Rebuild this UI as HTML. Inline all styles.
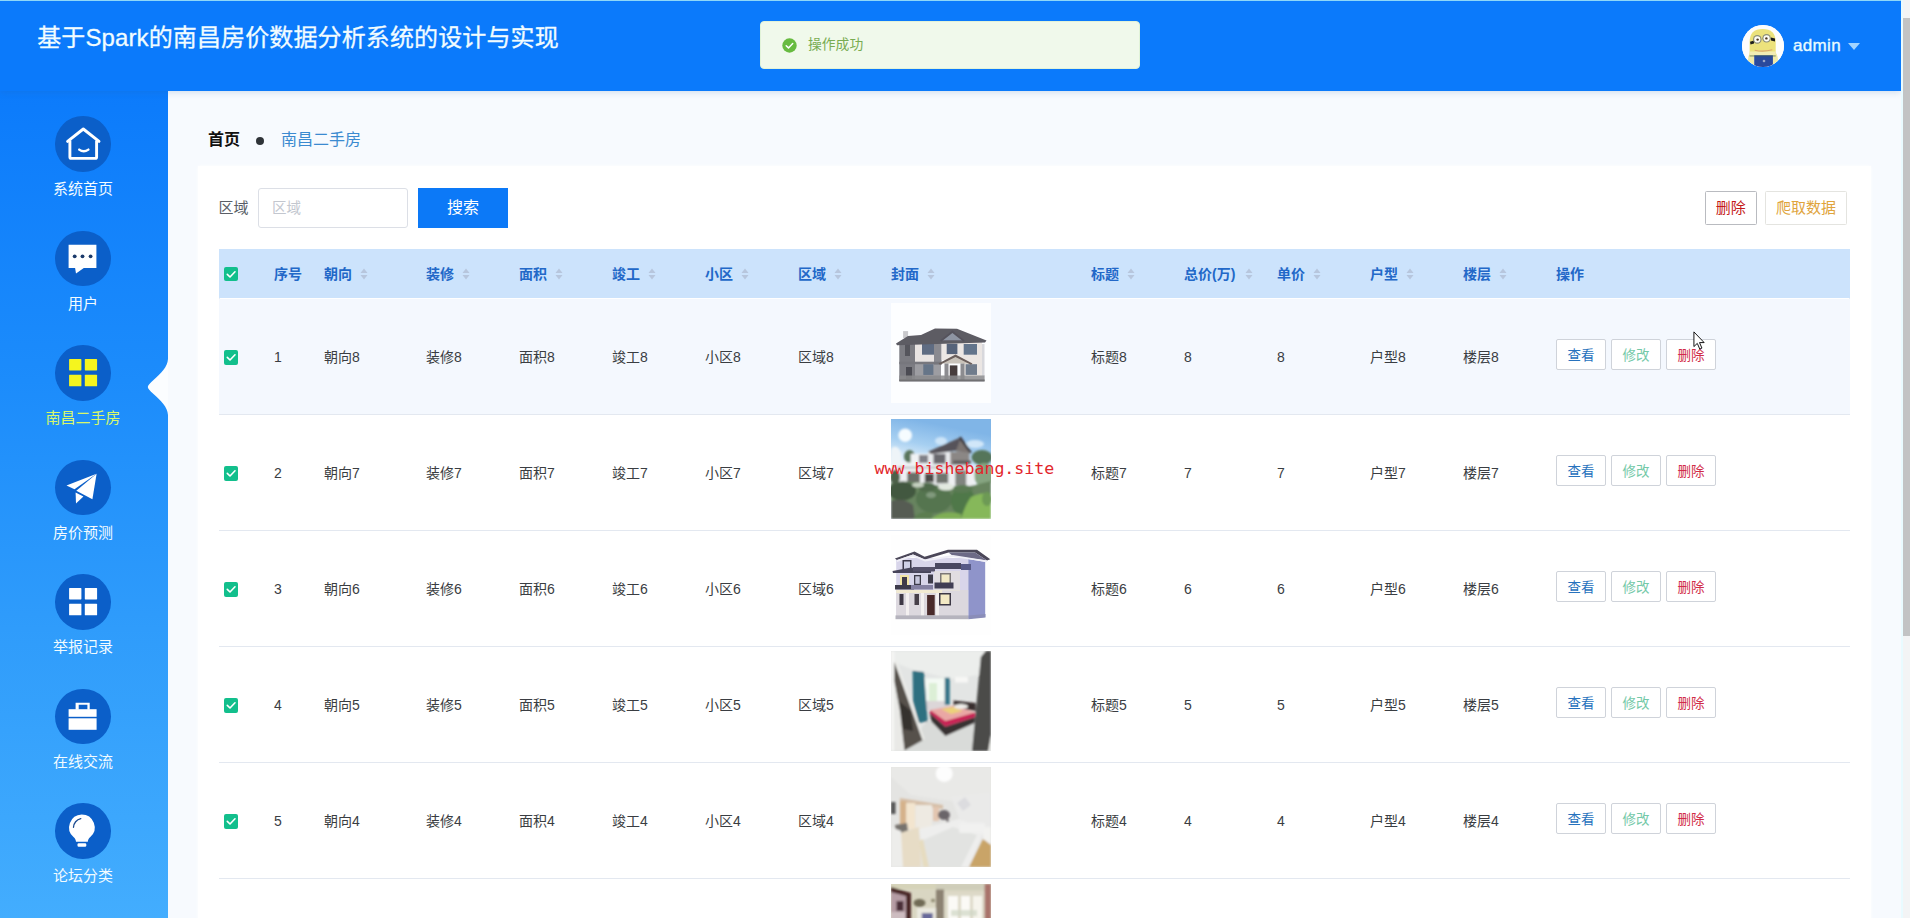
<!DOCTYPE html>
<html lang="zh-CN">
<head>
<meta charset="utf-8">
<title>基于Spark的南昌房价数据分析系统的设计与实现</title>
<style>
*{box-sizing:border-box;margin:0;padding:0}
html,body{width:1910px;height:918px;overflow:hidden;background:#f7faff}
body{font-family:"Liberation Sans","Noto Sans CJK SC",sans-serif;position:relative;color:#333}
.abs{position:absolute}
#page{position:absolute;left:0;top:0;width:1910px;height:918px;overflow:hidden;background:#f6f9fe}
/* header */
#hdr{position:absolute;left:0;top:0;width:1901px;height:91px;background:#0b7afb;box-shadow:0 1px 7px rgba(40,90,160,.2);z-index:5}
#hdr .topline{position:absolute;left:0;top:0;width:1910px;height:1px;background:#8fd8f8}
#title{position:absolute;left:37.200px;top:21.500px;font-size:24px;line-height:32px;color:#f1fcff;-webkit-text-stroke:.3px #f1fcff;white-space:nowrap;letter-spacing:.12px}
#toast{position:absolute;left:760px;top:20.5px;width:380px;height:48.5px;background:#f0f9eb;border:1px solid #e1f3d8;border-radius:4px}
#toast .ic{position:absolute;left:21px;top:16.5px;width:15px;height:15px}
#toast .tx{position:absolute;left:47px;top:13px;font-size:13.800px;line-height:20px;color:#78ac52;white-space:nowrap}
#avatar{position:absolute;left:1742px;top:25px;width:42px;height:42px;border-radius:50%;overflow:hidden;background:#fff}
#uname{position:absolute;left:1793px;top:35px;font-size:17px;line-height:22px;color:#e8fbff;white-space:nowrap;letter-spacing:.35px;-webkit-text-stroke:.35px #e8fbff}
#caret{position:absolute;left:1848px;top:43px;width:0;height:0;border-left:6px solid transparent;border-right:6px solid transparent;border-top:7px solid rgba(190,228,255,.85)}
/* sidebar */
#side{position:absolute;left:0;top:91px;width:168px;height:827px;background:linear-gradient(180deg,#0c7bfb 0%,#1c8cfb 35%,#2f9cfb 65%,#43adfe 100%);z-index:2}
.mi{position:absolute;left:0;width:168px;height:100px;text-align:center}
.mi .c{position:absolute;left:55.300px;top:0;width:55.700px;height:55.700px;border-radius:50%;background:#0b5fc9}
.mi .c svg{position:absolute;left:0;top:0;width:56px;height:56px}
.mi .t{position:absolute;left:0;top:62px;width:166px;font-size:15px;line-height:22px;color:#f2fbff;white-space:nowrap;text-align:center}
.mi.on .t{color:#d8f76a}
#notch{position:absolute;left:147px;top:267.500px;width:21px;height:56px}
/* main */
#main{position:absolute;left:168px;top:91px;width:1735px;height:827px;background:#f7fafe}
#card{position:absolute;left:198px;top:166px;width:1673px;height:760px;background:#fff;box-shadow:0 0 3px #fff}
#bc1{position:absolute;left:208px;top:129px;font-size:16px;line-height:22px;font-weight:bold;color:#111;white-space:nowrap}
#bcdot{position:absolute;left:256px;top:137px;width:8px;height:8px;border-radius:50%;background:#2f3338}
#bc2{position:absolute;left:281px;top:129px;font-size:16px;line-height:22px;color:#3b8ad0;white-space:nowrap}
#lab{position:absolute;left:218.5px;top:197px;font-size:15px;line-height:22px;color:#5a5e66;white-space:nowrap}
#inp{position:absolute;left:258px;top:188px;width:150px;height:39.5px;border:1px solid #dcdfe6;border-radius:3px;background:#fff}
#inp span{position:absolute;left:13px;top:9px;font-size:14.5px;line-height:20px;color:#c3c7cf;white-space:nowrap}
#sbtn{position:absolute;left:418px;top:188px;width:90px;height:40px;background:#0c79f7;color:#fff;font-size:16px;line-height:40px;text-align:center}
.tb{position:absolute;top:191px;height:33.500px;border:1px solid #c9cbd0;border-radius:1.500px;background:#fff;font-size:15px;line-height:32px;text-align:center;white-space:nowrap}
/* table */
#th{position:absolute;left:219px;top:249px;width:1630.500px;height:49.300px;background:#cce3fc}
.h{position:absolute;top:264px;font-size:14px;line-height:20px;font-weight:bold;color:#2268c8;white-space:nowrap}
.sc{position:absolute;top:267.700px;width:8px;height:12px}
.row{position:absolute;left:219px;width:1630.5px;height:116px;border-bottom:1px solid #e3e8f0;background:#fff}
.row.hv{background:#f4f8fe}
.row span{position:absolute;top:48.2px;font-size:14px;line-height:20px;color:#3a3d42;white-space:nowrap}
.cb{position:absolute;width:14.5px;height:14.5px;border-radius:2px;background:#12bf8c}
.cb svg{position:absolute;left:0;top:0;width:14.5px;height:14.5px}
.img{position:absolute;left:672px;top:4.5px;width:100px;height:100px;overflow:hidden}
.img svg{display:block;width:100px;height:100px}
.row .b{position:absolute;top:40px;width:50px;height:31.5px;border:1px solid #cfd3da;border-radius:2px;background:#fff;font-size:13.5px !important;line-height:32.5px !important;text-align:center}
.b1{left:1337px;color:#2772bd !important;border-color:#cfd3da}
.b2{left:1392px;color:#74c9a8 !important;border-color:#dde1e6}
.b3{left:1447px;color:#d12c48 !important;border-color:#d9b9bd}
#wm{position:absolute;left:874.500px;top:457.500px;font-family:"DejaVu Sans Mono","Liberation Mono",monospace;font-size:16.600px;line-height:22px;color:#e2262c;white-space:nowrap;z-index:4}
/* scrollbar */
#sbar{position:absolute;left:1903px;top:0;width:7px;height:918px;background:#f3f4f5;z-index:9}
#sbar i{position:absolute;left:0;top:18px;width:7px;height:618px;background:#c2c3c4}
#strip{position:absolute;left:1901px;top:0;width:2px;height:918px;background:#e9fbff;z-index:8}
</style>
</head>
<body>
<div id="page">
<!--DEFS--><svg width="0" height="0" style="position:absolute"><defs><filter id="bl1" x="-5%" y="-5%" width="110%" height="110%"><feGaussianBlur stdDeviation="0.350"/></filter><filter id="bl2" x="-5%" y="-5%" width="110%" height="110%"><feGaussianBlur stdDeviation="0.800"/></filter><filter id="bl3" x="-5%" y="-5%" width="110%" height="110%"><feGaussianBlur stdDeviation="0.350"/></filter></defs></svg><!--/DEFS-->
  <div id="main"></div>
  <div id="card"></div>

  <div id="hdr">
    <div class="topline"></div>
    <div id="title">基于Spark的南昌房价数据分析系统的设计与实现</div>
    <div id="toast">
      <svg class="ic" viewBox="0 0 15 15"><circle cx="7.5" cy="7.5" r="7.2" fill="#67bb40"/><path d="M4.2 7.7l2.3 2.2 4.2-4.3" fill="none" stroke="#fff" stroke-width="1.5" stroke-linecap="round" stroke-linejoin="round"/></svg>
      <div class="tx">操作成功</div>
    </div>
    <div id="avatar"><!--AVATAR--><svg viewBox="0 0 42 42" width="42" height="42"><rect width="42" height="42" fill="#fdfdfd"/><g filter="url(#bl3)"><path d="M6 42Q5 30 9 27L12 30V42z" fill="#efe9a8"/><path d="M36 42Q37 30 33 27L30 30V42z" fill="#efe9a8"/><path d="M7.600 31V17Q7.600 4 20.600 4T33.700 17V31z" fill="#ece27c"/><rect x="7.600" y="26.500" width="26.100" height="4" fill="#f2ecb4"/><path d="M12.700 25.200Q21 27.300 30.300 24.800" fill="none" stroke="#dba56c" stroke-width="1.100"/><rect x="12.200" y="30.300" width="18.700" height="12" fill="#2a4a9c"/><rect x="7.600" y="30.300" width="26.100" height="1.300" fill="#3c5a56" opacity=".5"/><circle cx="22" cy="36" r="1.300" fill="#9aa6c8"/><path d="M8 16.800L12 15.500V18.500L8.500 19.500z" fill="#1d1d1d"/><path d="M33 13.500L29 12.500V15.500L33 16.500z" fill="#1d1d1d"/><circle cx="15.300" cy="14.400" r="4.300" fill="#8b8f7a"/><circle cx="24.600" cy="13.300" r="4.300" fill="#8b8f7a"/><circle cx="15.300" cy="14.400" r="3.100" fill="#fffef6"/><circle cx="24.600" cy="13.300" r="3.100" fill="#fffef6"/><circle cx="15.600" cy="14.600" r="1.200" fill="#4a3520"/><circle cx="24.400" cy="13.400" r="1.200" fill="#4a3520"/></g></svg><!--/AVATAR--></div>
    <div id="uname">admin</div>
    <div id="caret"></div>
  </div>

  <div id="side">
    <div class="mi" style="top:25.3px"><div class="c"><svg viewBox="0 0 56 56"><path d="M12.6 25.4L28.300 13l15.700 12.400" fill="none" stroke="#fff" stroke-width="2.900" stroke-linecap="round" stroke-linejoin="round"/><path d="M14.900 24.500V40.900a1.500 1.500 0 0 0 1.500 1.500H40.100a1.500 1.500 0 0 0 1.500-1.500V24.500" fill="none" stroke="#fff" stroke-width="2.900" stroke-linejoin="round"/><path d="M24.200 33.600q4.500 3.400 9.200 0" fill="none" stroke="#fff" stroke-width="2.400" stroke-linecap="round"/></svg></div><div class="t">系统首页</div></div>
    <div class="mi" style="top:139.8px"><div class="c"><svg viewBox="0 0 56 56"><path d="M13.600 13.800h27.800v23.300H28.800l-7.800 5.500-.9-5.500H13.600z" fill="#fff"/><circle cx="19.700" cy="25.300" r="1.900" fill="#1b3a6b"/><circle cx="27.500" cy="25.300" r="1.900" fill="#1b3a6b"/><circle cx="35.600" cy="25.300" r="1.900" fill="#1b3a6b"/></svg></div><div class="t">用户</div></div>
    <div class="mi on" style="top:254.3px"><div class="c"><svg viewBox="0 0 56 56"><rect x="14.100" y="14.100" width="12.300" height="11.300" rx=".6" fill="#f5f51e"/><rect x="29.800" y="14.100" width="12.300" height="11.300" rx=".6" fill="#f5f51e"/><rect x="14.100" y="29.800" width="12.300" height="11.500" rx=".6" fill="#f5f51e"/><rect x="29.800" y="29.800" width="12.300" height="11.500" rx=".6" fill="#f5f51e"/></svg></div><div class="t">南昌二手房</div></div>
    <div class="mi" style="top:368.8px"><div class="c"><svg viewBox="0 0 56 56"><path d="M11.500 25.500L41.600 13.700 19.500 29.300z" fill="#fff"/><path d="M41.600 13.700L37.400 39.200 21.300 30.700z" fill="#fff"/><path d="M20.600 32.400L21 43.400 28.400 36.500z" fill="#fff"/></svg></div><div class="t">房价预测</div></div>
    <div class="mi" style="top:483.3px"><div class="c"><svg viewBox="0 0 56 56"><rect x="14.100" y="14.100" width="12.300" height="11.300" rx=".6" fill="#fff"/><rect x="29.800" y="14.100" width="12.300" height="11.300" rx=".6" fill="#fff"/><rect x="14.100" y="29.800" width="12.300" height="11.500" rx=".6" fill="#fff"/><rect x="29.800" y="29.800" width="12.300" height="11.500" rx=".6" fill="#fff"/></svg></div><div class="t">举报记录</div></div>
    <div class="mi" style="top:597.8px"><div class="c"><svg viewBox="0 0 56 56"><path d="M20.600 13.700h14.100v7h-2.300v-4.900h-8.700v4.900h-3.100z" fill="#fff"/><rect x="13.600" y="20.200" width="28" height="7.600" fill="#fff"/><rect x="13.600" y="29.300" width="28" height="11.500" fill="#fff"/></svg></div><div class="t">在线交流</div></div>
    <div class="mi" style="top:712.3px"><div class="c"><svg viewBox="0 0 56 56"><path d="M26.700 11.400a13 13 0 0 1 8.600 22.700c-1.600 1.500-2.400 2.800-2.500 4.700H21c-.1-1.900-.9-3.200-2.500-4.700A13 13 0 0 1 26.700 11.400z" fill="#fff"/><rect x="22.500" y="40.300" width="8.800" height="3.400" rx="1.200" fill="#fff"/><path d="M18.500 24.300a9 9 0 0 1 7.300-8.600" fill="none" stroke="#1b4a8f" stroke-width="1.300" stroke-linecap="round"/></svg></div><div class="t">论坛分类</div></div>
    <svg id="notch" viewBox="0 0 21 56"><path d="M21 0C20.500 8 14 14.500 6.500 21Q.8 26 .8 28Q.8 30 6.500 35C14 41.500 20.500 48 21 56z" fill="#fbfdff"/></svg>
  </div>

  <div id="bc1">首页</div><div id="bcdot"></div><div id="bc2">南昌二手房</div>
  <div id="lab">区域</div>
  <div id="inp"><span>区域</span></div>
  <div id="sbtn">搜索</div>
  <div class="tb" style="left:1705px;width:51.5px;color:#c41a1a;border-color:#b9bbc0">删除</div>
  <div class="tb" style="left:1765px;width:82px;color:#e0a43c;border-color:#e4e4e0">爬取数据</div>

  <div id="tbl" style="position:absolute;left:218.500px;top:249px;width:1px;height:680px;background:#e9edf4"></div><div id="tbr" style="position:absolute;left:1849px;top:249px;width:1px;height:680px;background:#e9edf4"></div>
  <div id="th"></div>
  <div class="cb" style="left:223.5px;top:266.5px"><svg viewBox="0 0 14.5 14.5"><path d="M3.3 7.4l2.7 2.6 5-5.2" fill="none" stroke="#fff" stroke-width="1.6" stroke-linecap="round" stroke-linejoin="round"/></svg></div>
  <div class="h" style="left:274px">序号</div>
  <div class="h" style="left:324px">朝向</div>
  <svg class="sc" style="left:360px" viewBox="0 0 8 12"><path d="M4 0.5L7.5 5H0.5z" fill="#b7c6dd"/><path d="M4 11.5L7.5 7H0.5z" fill="#b7c6dd"/></svg>
  <div class="h" style="left:426px">装修</div>
  <svg class="sc" style="left:462px" viewBox="0 0 8 12"><path d="M4 0.5L7.5 5H0.5z" fill="#b7c6dd"/><path d="M4 11.5L7.5 7H0.5z" fill="#b7c6dd"/></svg>
  <div class="h" style="left:519px">面积</div>
  <svg class="sc" style="left:555px" viewBox="0 0 8 12"><path d="M4 0.5L7.5 5H0.5z" fill="#b7c6dd"/><path d="M4 11.5L7.5 7H0.5z" fill="#b7c6dd"/></svg>
  <div class="h" style="left:612px">竣工</div>
  <svg class="sc" style="left:648px" viewBox="0 0 8 12"><path d="M4 0.5L7.5 5H0.5z" fill="#b7c6dd"/><path d="M4 11.5L7.5 7H0.5z" fill="#b7c6dd"/></svg>
  <div class="h" style="left:705px">小区</div>
  <svg class="sc" style="left:741px" viewBox="0 0 8 12"><path d="M4 0.5L7.5 5H0.5z" fill="#b7c6dd"/><path d="M4 11.5L7.5 7H0.5z" fill="#b7c6dd"/></svg>
  <div class="h" style="left:798px">区域</div>
  <svg class="sc" style="left:834px" viewBox="0 0 8 12"><path d="M4 0.5L7.5 5H0.5z" fill="#b7c6dd"/><path d="M4 11.5L7.5 7H0.5z" fill="#b7c6dd"/></svg>
  <div class="h" style="left:891px">封面</div>
  <svg class="sc" style="left:927px" viewBox="0 0 8 12"><path d="M4 0.5L7.5 5H0.5z" fill="#b7c6dd"/><path d="M4 11.5L7.5 7H0.5z" fill="#b7c6dd"/></svg>
  <div class="h" style="left:1091px">标题</div>
  <svg class="sc" style="left:1127px" viewBox="0 0 8 12"><path d="M4 0.5L7.5 5H0.5z" fill="#b7c6dd"/><path d="M4 11.5L7.5 7H0.5z" fill="#b7c6dd"/></svg>
  <div class="h" style="left:1184px">总价(万)</div>
  <svg class="sc" style="left:1245px" viewBox="0 0 8 12"><path d="M4 0.5L7.5 5H0.5z" fill="#b7c6dd"/><path d="M4 11.5L7.5 7H0.5z" fill="#b7c6dd"/></svg>
  <div class="h" style="left:1277px">单价</div>
  <svg class="sc" style="left:1313px" viewBox="0 0 8 12"><path d="M4 0.5L7.5 5H0.5z" fill="#b7c6dd"/><path d="M4 11.5L7.5 7H0.5z" fill="#b7c6dd"/></svg>
  <div class="h" style="left:1370px">户型</div>
  <svg class="sc" style="left:1406px" viewBox="0 0 8 12"><path d="M4 0.5L7.5 5H0.5z" fill="#b7c6dd"/><path d="M4 11.5L7.5 7H0.5z" fill="#b7c6dd"/></svg>
  <div class="h" style="left:1463px">楼层</div>
  <svg class="sc" style="left:1499px" viewBox="0 0 8 12"><path d="M4 0.5L7.5 5H0.5z" fill="#b7c6dd"/><path d="M4 11.5L7.5 7H0.5z" fill="#b7c6dd"/></svg>
  <div class="h" style="left:1556px">操作</div>
  <div class="row hv" style="top:298.5px"><div class="cb" style="left:4.5px;top:51.500px"><svg viewBox="0 0 14.5 14.5"><path d="M3.3 7.4l2.7 2.6 5-5.2" fill="none" stroke="#fff" stroke-width="1.6" stroke-linecap="round" stroke-linejoin="round"/></svg></div><span style="left:55px">1</span><span style="left:105px">朝向8</span><span style="left:207px">装修8</span><span style="left:300px">面积8</span><span style="left:393px">竣工8</span><span style="left:486px">小区8</span><span style="left:579px">区域8</span><span style="left:872px">标题8</span><span style="left:965px">8</span><span style="left:1058px">8</span><span style="left:1151px">户型8</span><span style="left:1244px">楼层8</span><div class="img"><!--IMG1--><svg viewBox="0 0 100 100"><rect width="100" height="100" fill="#fdfeff"/><g filter="url(#bl1)"><rect x="12.1" y="28.1" width="5" height="7" fill="#c9c9cc"/><rect x="8.300" y="40" width="16" height="38" fill="#7b7b82"/><rect x="24" y="40" width="19.500" height="19" fill="#e9e4e2"/><rect x="24" y="59" width="26" height="19" fill="#9d9da2"/><rect x="43" y="38" width="7.600" height="24" fill="#8a8a90"/><rect x="50.600" y="37" width="21.500" height="20" fill="#ece7e4"/><rect x="72" y="39" width="19" height="34" fill="#ebe6e3"/><rect x="91" y="41" width="2.500" height="32" fill="#d8d8dc"/><rect x="8.300" y="58.700" width="42" height="2.500" fill="#77777d"/><rect x="31" y="41" width="12" height="10.700" fill="#5e6c82"/><rect x="55.700" y="40.700" width="10.700" height="10.400" fill="#57647a"/><rect x="72.700" y="41" width="13.300" height="10.700" fill="#64748c"/><rect x="74.600" y="61.200" width="11.400" height="10.700" fill="#6f7c8c"/><rect x="32.300" y="61.200" width="10.100" height="10.700" fill="#667488"/><rect x="14" y="41" width="5" height="12" fill="#55555c"/><rect x="15" y="64" width="6" height="12" fill="#4b4b52"/><path d="M5 40.500L17 33 30 32 44 25.600 66 25.800 95.500 37.500 94 39.600 6 42.300z" fill="#5d5b64"/><path d="M61.400 28.600L50.600 37.300H72.100z" fill="#8e95a3"/><path d="M61.400 27.600L49 37.600l1.500 1L61.400 30l10.800 8.600 1.500-1z" fill="#55535c"/><path d="M64.500 52.600L49.400 60.500H78.400z" fill="#c9c3ba"/><path d="M64.500 51.600L47.500 60.500l1.500 1.300 15.500-7.900 15.500 7.900 1.500-1.300z" fill="#6b5e5b"/><rect x="53.500" y="60.500" width="4" height="17" fill="#8c8c90"/><rect x="69.500" y="60.500" width="4" height="17" fill="#8c8c90"/><rect x="58.800" y="62.400" width="7.600" height="14" fill="#463c3c"/><rect x="8.300" y="72.500" width="85.300" height="5.700" fill="#8b8b8d" opacity=".85"/><rect x="8.300" y="76.500" width="85.300" height="2" fill="#6f6f72"/></g></svg><!--/IMG1--></div><span class="b b1">查看</span><span class="b b2">修改</span><span class="b b3">删除</span></div>
  <div class="row" style="top:414.6px"><div class="cb" style="left:4.5px;top:51.500px"><svg viewBox="0 0 14.5 14.5"><path d="M3.3 7.4l2.7 2.6 5-5.2" fill="none" stroke="#fff" stroke-width="1.6" stroke-linecap="round" stroke-linejoin="round"/></svg></div><span style="left:55px">2</span><span style="left:105px">朝向7</span><span style="left:207px">装修7</span><span style="left:300px">面积7</span><span style="left:393px">竣工7</span><span style="left:486px">小区7</span><span style="left:579px">区域7</span><span style="left:872px">标题7</span><span style="left:965px">7</span><span style="left:1058px">7</span><span style="left:1151px">户型7</span><span style="left:1244px">楼层7</span><div class="img"><!--IMG2--><svg viewBox="0 0 100 100"><defs><linearGradient id="sky2" x1="0.200" y1="0" x2="0" y2="1"><stop offset="0" stop-color="#80b5e7"/><stop offset=".22" stop-color="#a6cff1"/><stop offset=".36" stop-color="#d6e9f8"/><stop offset=".46" stop-color="#eef5fb"/></linearGradient></defs><rect width="100" height="100" fill="url(#sky2)"/><g filter="url(#bl2)"><circle cx="14.200" cy="16.300" r="6.800" fill="#f6fcff"/><ellipse cx="50" cy="22" rx="6" ry="4" fill="#d9ecfb" opacity=".8"/><ellipse cx="84" cy="25" rx="9" ry="4" fill="#dcedfb" opacity=".85"/><path d="M0 30Q6 24 10 34V44H0z" fill="#eef4f8"/><ellipse cx="18.500" cy="37.500" rx="5.500" ry="6.500" fill="#58755c"/><ellipse cx="91" cy="38.500" rx="10.500" ry="7.500" fill="#55745a"/><ellipse cx="93" cy="56" rx="10" ry="12" fill="#86a481"/><rect x="3.300" y="43.600" width="17" height="5" fill="#f1f3f5"/><rect x="6.500" y="47" width="77" height="19.500" fill="#eef0f2"/><rect x="19.600" y="34.900" width="18" height="12" fill="#f0f2f4"/><rect x="28" y="36" width="9" height="8" fill="#808188"/><rect x="37" y="32.700" width="41.400" height="14" fill="#e9ebee"/><rect x="42.500" y="34.900" width="12" height="9.800" fill="#69686d"/><rect x="59.400" y="33" width="19" height="13" fill="#8b8785"/><rect x="62" y="41.500" width="18" height="3" fill="#5d5a5a"/><path d="M37 32.700L69.700 18.300 67 31.500 40 35z" fill="#57535a"/><path d="M69.700 20L64.500 32.500 79 33.500z" fill="#7c7572"/><path d="M69.700 17.300L68 19.500 79 34.500 80.800 33.200z" fill="#3b383e"/><rect x="16.300" y="53.400" width="12.600" height="10.900" fill="#6a6e68"/><rect x="33.800" y="54.500" width="9.200" height="8.700" fill="#4b4b49"/><rect x="45.200" y="53.900" width="12" height="10.400" fill="#70746e"/><rect x="64.300" y="51.200" width="10.900" height="15.200" fill="#80847f"/><rect x="6.500" y="47.500" width="70" height="2.200" fill="#c3c6c9"/><path d="M0 64Q20 60 40 66T84 66L100 62V100H0z" fill="#67845f"/><ellipse cx="11" cy="72" rx="14" ry="9.500" fill="#42593f"/><ellipse cx="4" cy="58" rx="5" ry="7" fill="#4d6149"/><ellipse cx="43" cy="80" rx="18" ry="14" fill="#55744f"/><ellipse cx="36" cy="68" rx="9" ry="4.500" fill="#4f6b4b"/><ellipse cx="72" cy="82" rx="12" ry="14" fill="#4f7848"/><ellipse cx="71" cy="70" rx="11" ry="4" fill="#5a7a52"/><ellipse cx="55" cy="68" rx="8" ry="3.500" fill="#e2e9df"/><ellipse cx="27" cy="66" rx="6" ry="2.500" fill="#c5d0c0"/><ellipse cx="40" cy="76" rx="5" ry="3" fill="#8ca488" opacity=".8"/><path d="M80 78Q92 72 100 76V100H70Q74 86 80 78z" fill="#86b85a"/><ellipse cx="96" cy="80" rx="5" ry="7" fill="#6d9a55"/><path d="M0 82Q12 78 22 86L24 100H0z" fill="#565b53"/><path d="M40 100Q52 90 70 95V100z" fill="#7fae55"/><path d="M22 100Q30 90 42 94L40 100z" fill="#5b7d50"/></g></svg><!--/IMG2--></div><span class="b b1">查看</span><span class="b b2">修改</span><span class="b b3">删除</span></div>
  <div class="row" style="top:530.7px"><div class="cb" style="left:4.5px;top:51.500px"><svg viewBox="0 0 14.5 14.5"><path d="M3.3 7.4l2.7 2.6 5-5.2" fill="none" stroke="#fff" stroke-width="1.6" stroke-linecap="round" stroke-linejoin="round"/></svg></div><span style="left:55px">3</span><span style="left:105px">朝向6</span><span style="left:207px">装修6</span><span style="left:300px">面积6</span><span style="left:393px">竣工6</span><span style="left:486px">小区6</span><span style="left:579px">区域6</span><span style="left:872px">标题6</span><span style="left:965px">6</span><span style="left:1058px">6</span><span style="left:1151px">户型6</span><span style="left:1244px">楼层6</span><div class="img"><!--IMG3--><svg viewBox="0 0 100 100"><rect width="100" height="100" fill="#fefefe"/><g filter="url(#bl1)"><path d="M77.200 24L94.200 27V82L77.200 83.500z" fill="#8f94ca"/><rect x="5.200" y="23" width="72" height="60.500" fill="#d8d5ea"/><rect x="5.200" y="55" width="72" height="28" fill="#dcd8de"/><path d="M3.900 23.500L23.500 16.600 33.600 21.700 56.900 14.700H86L99.300 24.200 96 25.500 84 17.500 57.500 17.500 34 24.500 22 19.500 6 25z" fill="#4b4759"/><path d="M57.500 17.500H84L96 25.500 62 21z" fill="#6d6a86"/><path d="M6 25L22 19.500 34 24.500 62 20 96 25.500V27L62 22 34 26.500 22 21.500 6 27z" fill="#efeef6"/><rect x="11.500" y="25" width="9" height="10" fill="#3a3848"/><rect x="13" y="26.500" width="6" height="8" fill="#cfd0e6"/><path d="M1.500 36L20 32.500 40 36V38H2z" fill="#47445a"/><rect x="22" y="32" width="22" height="4.500" fill="#54516a"/><rect x="44" y="28" width="26" height="6" fill="#4a4760"/><rect x="70" y="29" width="10" height="6" fill="#585a86"/><rect x="9" y="40" width="9" height="12" fill="#f3e6a6"/><rect x="11" y="42" width="5" height="10" fill="#3f3b48"/><rect x="23" y="40" width="7" height="10" fill="#3d3a48"/><rect x="24.300" y="41.300" width="4.400" height="7.500" fill="#c6c6dc"/><rect x="37" y="39.500" width="5" height="9" fill="#3d3a48"/><rect x="49" y="38" width="11" height="12" fill="#3d3a48"/><rect x="50.500" y="39.500" width="8" height="9" fill="#f0e7c0"/><rect x="43" y="36" width="26" height="20" fill="#f3edd0" opacity=".35"/><rect x="4" y="50" width="19" height="4.500" fill="#3e3b4c"/><rect x="20" y="50" width="22" height="4.500" fill="#8581a2"/><rect x="43.500" y="47.500" width="19" height="6" fill="#413e52"/><rect x="5.200" y="55" width="46" height="3" fill="#f1ead2"/><rect x="8.500" y="59" width="4" height="11" fill="#3c3844"/><rect x="23.500" y="59" width="4.500" height="11" fill="#463f4a"/><rect x="36.100" y="60" width="7.600" height="20.400" fill="#4a2b2a"/><rect x="48" y="58" width="12" height="12.500" fill="#3c3844"/><rect x="49.500" y="59.500" width="9" height="9.500" fill="#f3e9c4"/><rect x="15" y="58" width="3" height="23" fill="#f3f0f0"/><rect x="30" y="58" width="3" height="23" fill="#f3f0f0"/><rect x="45" y="58" width="3" height="23" fill="#f3f0f0"/><rect x="4.500" y="80.400" width="73" height="3.800" fill="#b5b3bd"/><path d="M77.500 80.400L94.500 79V82.500L77.500 84.200z" fill="#8a8db8"/></g></svg><!--/IMG3--></div><span class="b b1">查看</span><span class="b b2">修改</span><span class="b b3">删除</span></div>
  <div class="row" style="top:646.8px"><div class="cb" style="left:4.5px;top:51.500px"><svg viewBox="0 0 14.5 14.5"><path d="M3.3 7.4l2.7 2.6 5-5.2" fill="none" stroke="#fff" stroke-width="1.6" stroke-linecap="round" stroke-linejoin="round"/></svg></div><span style="left:55px">4</span><span style="left:105px">朝向5</span><span style="left:207px">装修5</span><span style="left:300px">面积5</span><span style="left:393px">竣工5</span><span style="left:486px">小区5</span><span style="left:579px">区域5</span><span style="left:872px">标题5</span><span style="left:965px">5</span><span style="left:1058px">5</span><span style="left:1151px">户型5</span><span style="left:1244px">楼层5</span><div class="img"><!--IMG4--><svg viewBox="0 0 100 100"><rect width="100" height="100" fill="#e3e5e4"/><g filter="url(#bl2)"><path d="M0 0H100V22L60 28 20 18 0 10z" fill="#eceeec"/><path d="M36 70L84 72 82 100H14z" fill="#d9dbd9"/><rect x="33.600" y="27.400" width="20.200" height="22.600" fill="#f4faf4"/><rect x="38" y="32" width="8" height="18" fill="#dcefd6"/><rect x="35" y="50" width="22" height="9" fill="#dcd6d8"/><path d="M21.600 19.800L33 21 36.700 70.300 28 72 22 50z" fill="#2f6f80"/><rect x="53.800" y="26.700" width="5" height="27.200" fill="#357688"/><rect x="64" y="26" width="13" height="5.500" fill="#f7f7f5"/><rect x="0" y="0" width="3.300" height="100" fill="#f6f6f4"/><path d="M3.300 11L31.700 89.300 13.400 99.400 8 60 3.300 30z" fill="#56514b"/><path d="M3.300 9L5.500 9 33.500 88 31.700 89.300z" fill="#eeeeea"/><path d="M3.300 30L9 60 13.400 99.400H3.300z" fill="#e9e9e6"/><path d="M8 50L20 60 22 80 12 78z" fill="#35322f"/><path d="M62.600 49.500L84.700 52V60L62.600 56.400z" fill="#382f2f"/><path d="M38.600 61.500L54.400 75.400 84 66 83.500 72 54.400 85 40.500 70.500z" fill="#393333"/><path d="M39.300 59L63.300 54.500 84 61.500 54.400 70z" fill="#eaa7a4"/><path d="M50 58L62 56 72 60 60 63z" fill="#ecd27a"/><path d="M38.600 61.500L39.300 59 54.400 70 84 61.500V66L54.400 75.400z" fill="#c92054"/><ellipse cx="70" cy="55.500" rx="7" ry="2.500" fill="#efeeea"/><path d="M94.800 0H100V84L97.400 100H81L89.800 6z" fill="#4b4b49"/><path d="M100 84L97.400 100H100z" fill="#ecece8"/></g></svg><!--/IMG4--></div><span class="b b1">查看</span><span class="b b2">修改</span><span class="b b3">删除</span></div>
  <div class="row" style="top:762.9px"><div class="cb" style="left:4.5px;top:51.500px"><svg viewBox="0 0 14.5 14.5"><path d="M3.3 7.4l2.7 2.6 5-5.2" fill="none" stroke="#fff" stroke-width="1.6" stroke-linecap="round" stroke-linejoin="round"/></svg></div><span style="left:55px">5</span><span style="left:105px">朝向4</span><span style="left:207px">装修4</span><span style="left:300px">面积4</span><span style="left:393px">竣工4</span><span style="left:486px">小区4</span><span style="left:579px">区域4</span><span style="left:872px">标题4</span><span style="left:965px">4</span><span style="left:1058px">4</span><span style="left:1151px">户型4</span><span style="left:1244px">楼层4</span><div class="img"><!--IMG5--><svg viewBox="0 0 100 100"><rect width="100" height="100" fill="#e4e4e2"/><g filter="url(#bl2)"><path d="M0 0H100V30L60 34 20 28 0 10z" fill="#e9e9e7"/><path d="M60 30L100 26V70L70 56z" fill="#eaeae9"/><circle cx="53.200" cy="6.500" r="8.500" fill="#fdfdfd"/><path d="M9 31L52 38V42L9 36z" fill="#d6bfa8"/><rect x="9" y="34" width="6.300" height="24" fill="#d5b28b"/><rect x="15.300" y="36" width="9" height="26" fill="#f3e5cf"/><rect x="25" y="38" width="16" height="24" fill="#eeeae2"/><rect x="42" y="40" width="6" height="14" fill="#e3c6b0"/><ellipse cx="53" cy="48" rx="6" ry="5" fill="#6b6569"/><path d="M56 50L60 58 55 57z" fill="#5b5559"/><rect x="0" y="35" width="4.500" height="12" fill="#555"/><path d="M4 58L16 56 18 72 6 76z" fill="#77736e"/><path d="M9 66L28 60 30 100H10z" fill="#e7dcc6"/><path d="M0 60L10 64 12 100H0z" fill="#ededeb"/><path d="M28 62L68 52 94 62 78 100H33z" fill="#eeeeed"/><path d="M30 74L62 60 86 68 70 100H36z" fill="#e2e3e1"/><path d="M28 74L32 72 38 100H32z" fill="#e6dcc0"/><rect x="68" y="56" width="26" height="10" rx="2" fill="#f1f1f0"/><path d="M92 60H100V78L92 72z" fill="#f2f2f0"/><path d="M78 100L92 72 100 78V100z" fill="#c9a468"/><path d="M66 36L74 30 80 38 72 44z" fill="#dcdcdf"/></g></svg><!--/IMG5--></div><span class="b b1">查看</span><span class="b b2">修改</span><span class="b b3">删除</span></div>
  <div class="row" style="top:879.0px"><div class="cb" style="left:4.5px;top:51.500px"><svg viewBox="0 0 14.5 14.5"><path d="M3.3 7.4l2.7 2.6 5-5.2" fill="none" stroke="#fff" stroke-width="1.6" stroke-linecap="round" stroke-linejoin="round"/></svg></div><span style="left:55px">6</span><span style="left:105px">朝向3</span><span style="left:207px">装修3</span><span style="left:300px">面积3</span><span style="left:393px">竣工3</span><span style="left:486px">小区3</span><span style="left:579px">区域3</span><span style="left:872px">标题3</span><span style="left:965px">3</span><span style="left:1058px">3</span><span style="left:1151px">户型3</span><span style="left:1244px">楼层3</span><div class="img"><!--IMG6--><svg viewBox="0 0 100 100"><rect width="100" height="100" fill="#d9d6c2"/><g filter="url(#bl2)"><rect x="0" y="0" width="100" height="5" fill="#d5d3b8"/><rect x="45" y="0" width="55" height="6" fill="#cfcdb9"/><path d="M0 3L20 9V100H0z" fill="#4a2626"/><path d="M0 8L15 12V100H0z" fill="#b59ca4"/><rect x="5.500" y="17" width="7" height="10" fill="#4a2f38"/><rect x="0" y="28" width="14" height="10" fill="#cdbcc0"/><ellipse cx="28.500" cy="19" rx="6" ry="4" fill="#6f6a55"/><ellipse cx="42" cy="16.500" rx="2" ry="1.800" fill="#8b866d"/><rect x="26" y="24" width="22" height="20" fill="#ebe9e0"/><rect x="30.800" y="29" width="11" height="10" fill="#68699a"/><rect x="45" y="5.500" width="8" height="60" fill="#8c8272"/><rect x="53" y="8" width="41" height="60" fill="#ddd9c8"/><rect x="57" y="12" width="10" height="40" fill="#fbfaf6"/><rect x="70" y="12" width="9" height="40" fill="#fbfaf6"/><rect x="82" y="12" width="9" height="40" fill="#f6f4ec"/><rect x="60" y="26" width="26" height="6" fill="#cfd6c4" opacity=".7"/><rect x="93.600" y="0" width="6.400" height="100" fill="#a9736b"/></g></svg><!--/IMG6--></div><span class="b b1">查看</span><span class="b b2">修改</span><span class="b b3">删除</span></div>
  <div id="wm">www.bishebang.site</div>
  <svg id="cur" style="position:absolute;left:1693.300px;top:331px;width:12.500px;height:19.600px;z-index:7" viewBox="0 0 14 22"><path d="M1 1V17.500L4.800 13.900 7.600 20.300 10 19.200 7.300 13H12.500z" fill="#fff" stroke="#111" stroke-width="1.100" stroke-linejoin="round"/></svg>
  <div id="strip"></div>
  <div id="sbar"><i></i></div>
</div>
</body>
</html>
